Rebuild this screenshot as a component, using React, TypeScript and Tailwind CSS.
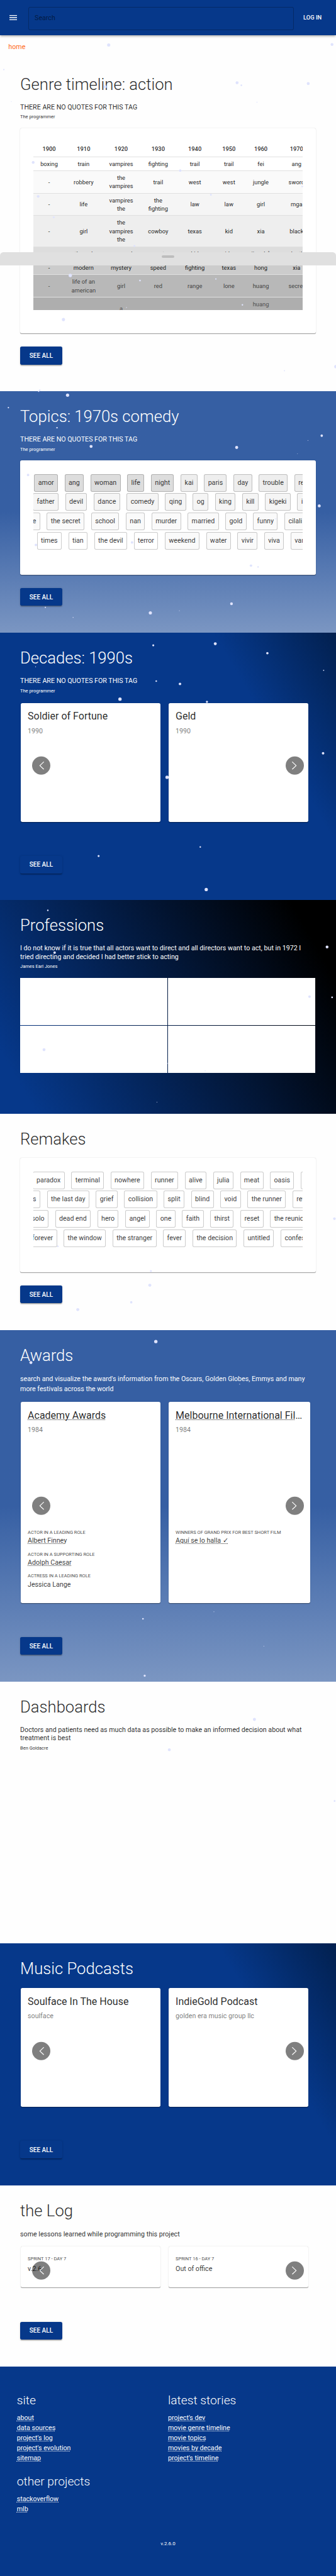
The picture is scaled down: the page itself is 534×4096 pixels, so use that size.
import type { ReactNode } from "react";

/* ---------- data ---------- */

const decades = ["1900", "1910", "1920", "1930", "1940", "1950", "1960", "1970"];

type TableRow = { tone: string; cells: string[] };

const timeline: TableRow[] = [
  { tone: "bg-white text-black/90", cells: ["boxing", "train", "vampires", "fighting", "trail", "trail", "fei", "ang"] },
  { tone: "bg-[#fafafa] text-black/90", cells: ["-", "robbery", "the\nvampires", "trail", "west", "west", "jungle", "sword"] },
  { tone: "bg-[#f5f5f5] text-black/90", cells: ["-", "life", "vampires\nthe", "the\nfighting", "law", "law", "girl", "mga"] },
  { tone: "bg-[#eeeeee] text-black/90", cells: ["-", "girl", "the\nvampires\nthe", "cowboy", "texas", "kid", "xia", "black"] },
  { tone: "bg-[#dddddd] text-black/90", cells: ["-", "the red", "proposal", "west", "kid", "raiders", "jingchå", "death"] },
  { tone: "bg-[#cccccc] text-black/90", cells: ["-", "modern", "mystery", "speed", "fighting", "texas", "hong", "xia"] },
  { tone: "bg-[#b8b8b8] text-black/70", cells: ["-", "life of an\namerican", "girl", "red", "range", "lone", "huang", "secret"] },
  { tone: "bg-[#aeaeae] text-black/60", cells: ["-", "fireman", "a\nman", "silent", "rider", "wild", "huang\nfei\nhong", "-"] },
];

type ChipRow = { shift: string; chips: [string, string][] };

const g1 = "bg-[#dddddd]";
const g2 = "bg-[#eeeeee]";
const g3 = "bg-[#f5f5f5]";
const g4 = "bg-[#fafafa]";
const g5 = "bg-white";

const topicRows: ChipRow[] = [
  {
    shift: "ml-[1.6px]",
    chips: [["amor", g1], ["ang", g1], ["woman", g1], ["life", g1], ["night", g1], ["kai", g2], ["paris", g2], ["day", g2], ["trouble", g2], ["rena", g2]],
  },
  {
    shift: "-ml-[1.8px]",
    chips: [["father", g3], ["devil", g3], ["dance", g3], ["comedy", g3], ["qing", g3], ["og", g3], ["king", g3], ["kill", g3], ["kigeki", g3], ["italian", g3]],
  },
  {
    shift: "-ml-[32.5px]",
    chips: [["love", g4], ["the secret", g4], ["school", g4], ["nan", g4], ["murder", g4], ["married", g4], ["gold", g4], ["funny", g4], ["cilali", g4]],
  },
  {
    shift: "ml-[7.8px]",
    chips: [["times", g5], ["tian", g5], ["the devil", g5], ["terror", g5], ["weekend", g4], ["water", g4], ["vivir", g4], ["viva", g4], ["var", g4]],
  },
];

const remakeRows: ChipRow[] = [
  {
    shift: "-ml-[2.5px]",
    chips: [["paradox", g5], ["terminal", g5], ["nowhere", g5], ["runner", g5], ["alive", g5], ["julia", g5], ["meat", g5], ["oasis", g5], ["twins", g5]],
  },
  {
    shift: "-ml-[27.7px]",
    chips: [["lies", g5], ["the last day", g5], ["grief", g5], ["collision", g5], ["split", g5], ["blind", g5], ["void", g5], ["the runner", g5], ["refuge", g5]],
  },
  {
    shift: "-ml-[14.1px]",
    chips: [["solo", g5], ["dead end", g5], ["hero", g5], ["angel", g5], ["one", g5], ["faith", g5], ["thirst", g5], ["reset", g5], ["the reunion", g5]],
  },
  {
    shift: "-ml-[13.2px]",
    chips: [["forever", g5], ["the window", g5], ["the stranger", g5], ["fever", g5], ["the decision", g5], ["untitled", g5], ["confession", g5]],
  },
];

/* x, y, radius of every snowflake drifting over the page */
const snow: [number, number, number][] = [
  [258.7, 107, 3.8], [790.3, 106, 3.4], [9.2, 165.7, 1.6], [250.5, 206.7, 3.6], [564.3, 197, 3.5], [574.5, 203, 2],
  [733.7, 199, 3.5], [27, 242, 1], [611.7, 243.3, 1.2], [79, 386.7, 3.3], [429, 406.3, 3], [719.4, 444, 2],
  [90.8, 467.7, 3.2], [502, 464, 2.2], [128, 517.3, 2.2], [320, 585.7, 2.3], [167.3, 656, 4], [333.2, 668, 2.1],
  [513.8, 664.3, 1.7], [301, 732.3, 1], [577, 726, 1.8], [151, 761, 3.8], [677, 882.7, 1.3], [799.5, 873, 4],
  [94.5, 929.5, 2], [92, 931.8, 1.5], [160.8, 941, 3.9], [20, 970.7, 1.6], [135.7, 1018.6, 1.8], [765.8, 1037.5, 2.9],
  [733, 1048.8, 0.8], [216.8, 1063.1, 3.6], [563.3, 1065.6, 3.6], [708.2, 1080.7, 0.7], [66.8, 1131.2, 2.9],
  [759.9, 1204.8, 3.5], [656.6, 1235.4, 1.3], [314.3, 1291.8, 2.9], [85.5, 1297.8, 3], [597.4, 1346.9, 2.9],
  [614.3, 1350, 1.8], [551, 1437.7, 3.3], [108, 1446.2, 1.5], [357.9, 1459.5, 3.8], [427, 1454.2, 0.8], [174, 1470.4, 1],
  [364.8, 1536.7, 2.4], [512.4, 1533, 3.5], [636.4, 1555.5, 2.8], [84.7, 1587.8, 1], [770.4, 1596.3, 1.4],
  [371.9, 1622, 1.9], [428.4, 1628.6, 3], [285.6, 1664.9, 4], [492.6, 1671.4, 2.5], [769, 1793.9, 3], [397.6, 1851, 3.9],
  [476.7, 2017, 1.8], [234.7, 2038.4, 2.4], [490.9, 2118.4, 3.9], [113.8, 2168, 1.8], [778.5, 2255, 3.4],
  [130, 2268.7, 3], [790.5, 2375, 2.1], [736.7, 2373.3, 3], [104.8, 2499.7, 3.5], [398.5, 2532.3, 1], [488.3, 2550.3, 1.2],
  [373.5, 2624.7, 0.8], [796, 2902.3, 3.2], [137.8, 2968, 1.9], [359.2, 3027, 2.3], [356.6, 3060.7, 3.7],
  [312.4, 3101.3, 2.8], [185.2, 3118.7, 3.6], [370.9, 3194.8, 4], [73.6, 3244.8, 3.6], [570.4, 3296.3, 0.9],
  [509.2, 3838.2, 0.9], [340.3, 3855, 2], [628, 3920.3, 0.8], [344.4, 3990.6, 2.5], [605.6, 4094.7, 3.6],
  [403, 4167, 3.4], [796.4, 4289, 2.1],
];

const faintSnow: [number, number, number][] = [
  [445, 1287.6, 3], [299.8, 2807, 2.8], [426, 2856.7, 2.4], [592.3, 2911.3, 2.8],
];

/* ---------- building blocks ---------- */

const paper =
  "rounded-[4px] bg-white shadow-[0_2px_1px_-1px_rgba(0,0,0,0.2),0_1px_1px_0_rgba(0,0,0,0.14),0_1px_3px_0_rgba(0,0,0,0.12)]";

const dotted = "underline decoration-dotted decoration-1 underline-offset-2";

function Section({ title, tone, children }: { title: string; tone: string; children?: ReactNode }) {
  return (
    <section className={`px-12 pt-9 ${tone}`}>
      <h2 className="text-[38.4px] leading-[48px] font-light whitespace-nowrap">{title}</h2>
      {children}
    </section>
  );
}

function Quote({ text, author }: { text: string; author: string }) {
  return (
    <blockquote className="mt-[21px]">
      <p className="text-base leading-5">{text}</p>
      <cite className="mt-1.5 block text-[11.2px] leading-4 not-italic">{author}</cite>
    </blockquote>
  );
}

function SeeAll({ className }: { className: string }) {
  return (
    <div className={`flex pb-16 ${className}`}>
      <button className="h-[42px] w-[100px] rounded-[4px] bg-[#06388a] text-[15px] font-medium text-white shadow-[0_3px_1px_-2px_rgba(0,0,0,0.2),0_2px_2px_0_rgba(0,0,0,0.14),0_1px_5px_0_rgba(0,0,0,0.12)]">
        SEE ALL
      </button>
    </div>
  );
}

function ChipCloud({ rows, className }: { rows: ChipRow[]; className: string }) {
  return (
    <div className={`h-[272px] p-8 ${paper} ${className}`}>
      <div className="flex flex-col gap-1 overflow-hidden">
        {rows.map((row) => (
          <div key={row.chips[0][0]} className={`flex gap-4 ${row.shift}`}>
            {row.chips.map(([label, fill]) => (
              <span
                key={label}
                className={`flex h-[42px] shrink-0 items-center rounded-[4px] border border-black/20 px-2 text-base whitespace-nowrap text-black/80 ${fill}`}
              >
                {label}
              </span>
            ))}
          </div>
        ))}
      </div>
    </div>
  );
}

function Arrow({ side }: { side: "left" | "right" }) {
  return (
    <button
      aria-label={side === "left" ? "previous" : "next"}
      className={`absolute top-1/2 z-10 flex size-[43px] -translate-y-1/2 items-center justify-center rounded-full bg-black/50 ${side === "left" ? "left-[29px]" : "right-[29px]"}`}
    >
      <svg width="12" height="20" viewBox="0 0 12 20" fill="none" stroke="#fff" strokeWidth="1.8" strokeLinecap="round" strokeLinejoin="round">
        <path d={side === "left" ? "M11 1.5 2 10l9 8.500" : "M1 1.500 10 10l-9 8.500"} />
      </svg>
    </button>
  );
}

function Slider({ className, children }: { className: string; children: ReactNode }) {
  return (
    <div className={`relative flex gap-5 pt-0.5 pb-[18px] pl-0.5 ${className}`}>
      {children}
      <Arrow side="left" />
      <Arrow side="right" />
    </div>
  );
}

function MediaCard({ title, subtitle, size, linked, children }: { title: string; subtitle: string; size: string; linked?: boolean; children?: ReactNode }) {
  return (
    <article className={`p-4 ${paper} ${size}`}>
      <h3 className={`truncate text-2xl leading-8 text-black/85 ${linked ? dotted : ""}`}>{title}</h3>
      <p className="mt-[7.5px] text-base leading-6 text-black/55">{subtitle}</p>
      {children}
    </article>
  );
}

function Credit({ label, name, linked = true }: { label: string; name: string; linked?: boolean }) {
  return (
    <div>
      <p className="text-[11.2px] leading-4 text-black/75">{label}</p>
      <p className={`text-base leading-6 text-black/80 ${linked ? dotted : ""}`}>{name}</p>
    </div>
  );
}

function LinkList({ title, links, className = "" }: { title: string; links: string[]; className?: string }) {
  return (
    <div className={className}>
      <h3 className="text-[28.8px] leading-9 font-light">{title}</h3>
      <ul className="mt-[11px]">
        {links.map((link) => (
          <li key={link} className="text-base leading-6">
            <a className={dotted}>{link}</a>
          </li>
        ))}
      </ul>
    </div>
  );
}

/* ---------- page ---------- */

function Header() {
  return (
    <header className="relative flex h-[84px] bg-[#06388a] pl-5 shadow-[0_2px_4px_-1px_rgba(0,0,0,0.2),0_4px_5px_0_rgba(0,0,0,0.14),0_1px_10px_0_rgba(0,0,0,0.12)]">
      <svg className="mt-[30px]" width="24" height="24" viewBox="0 0 24 24" fill="#fff">
        <path d="M3 18h18v-2H3v2zm0-5h18v-2H3v2zm0-7v2h18V6H3z" />
      </svg>
      <div className="mt-4 ml-6 flex h-14 w-[632px] items-center rounded-[4px] border border-black/25 pl-[13px] text-base text-black/55">
        Search
      </div>
      <span className="mt-[31px] ml-[22px] text-sm leading-5 font-medium text-white">LOG IN</span>
    </header>
  );
}

function TimelineTable() {
  return (
    <div className={`mt-[18px] h-[489px] p-8 ${paper}`}>
      <div className="h-[401px] overflow-hidden">
        <table className="w-[673px] table-fixed border-separate border-spacing-0 text-center text-sm leading-5">
          <colgroup>
            <col className="w-[73.700px]" />
            <col className="w-[90.600px]" />
            <col className="w-[88px]" />
            <col className="w-[88.400px]" />
            <col className="w-[86.200px]" />
            <col className="w-[76px]" />
            <col className="w-[76px]" />
            <col className="w-[94.100px]" />
          </colgroup>
          <thead>
            <tr>
              {decades.map((year) => (
                <th key={year} className="h-[37px] border-b border-[#e0e0e0] font-medium text-black/85">
                  {year}
                </th>
              ))}
            </tr>
          </thead>
          <tbody>
            {timeline.map((row, index) => (
              <tr key={index} className={row.tone}>
                {row.cells.map((cell, column) => (
                  <td key={column} className="border-b border-[#e0e0e0] py-1.5 whitespace-pre">
                    {cell}
                  </td>
                ))}
              </tr>
            ))}
          </tbody>
        </table>
      </div>
    </div>
  );
}

function Footer() {
  return (
    <footer className="h-[500px] bg-[#06388a] px-10 pt-16 text-white">
      <div className="grid grid-cols-2">
        <div>
          <LinkList title="site" links={["about", "data sources", "project's log", "project's evolution", "sitemap"]} />
          <LinkList className="mt-[26px]" title="other projects" links={["stackoverflow", "mlb"]} />
        </div>
        <LinkList
          title="latest stories"
          links={["project's dev", "movie genre timeline", "movie topics", "movies by decade", "project's timeline"]}
        />
      </div>
      <p className="mt-[62px] text-center text-xs leading-[18px]">v.2.6.0</p>
    </footer>
  );
}

export default function App() {
  return (
    <div className="h-[4096px] overflow-hidden bg-white">
      <div className="relative overflow-hidden bg-[#fefefe] font-['Roboto',sans-serif] text-black/85 [zoom:0.6677]">
        <Header />
        <nav className="h-14 pt-4 pl-5 text-base leading-6 text-[#ff6a1a]">home</nav>

        <Section title="Genre timeline: action" tone="">
          <Quote text="THERE ARE NO QUOTES FOR THIS TAG" author="The programmer" />
          <TimelineTable />
          <SeeAll className="pt-8" />
        </Section>

        <Section title="Topics: 1970s comedy" tone="bg-linear-to-b from-[#365fa3] from-50% to-[#7b96c2] text-white">
          <Quote text="THERE ARE NO QUOTES FOR THIS TAG" author="The programmer" />
          <ChipCloud rows={topicRows} className="mt-[18px]" />
          <SeeAll className="pt-8" />
        </Section>

        <Section title="Decades: 1990s" tone="bg-linear-[60deg] from-[#06388a] from-75% to-[#02204f] text-white">
          <Quote text="THERE ARE NO QUOTES FOR THIS TAG" author="The programmer" />
          <Slider className="mt-[18px]">
            <MediaCard title="Soldier of Fortune" subtitle="1990" size="h-[283px] w-[332px]" />
            <MediaCard title="Geld" subtitle="1990" size="h-[283px] w-[332px]" />
          </Slider>
          <SeeAll className="pt-[63px]" />
        </Section>

        <Section title="Professions" tone="bg-linear-[60deg] from-[#06388a] from-8% to-black to-90% text-white">
          <Quote
            text="I do not know if it is true that all actors want to direct and all directors want to act, but in 1972 I tried directing and decided I had better stick to acting"
            author="James Earl Jones"
          />
          <div className="mt-[18px] grid grid-cols-[350px_350px] grid-rows-[112px_112px] gap-0.5 pb-[98px]">
            <div className="bg-white" />
            <div className="bg-white" />
            <div className="bg-white" />
            <div className="bg-white" />
          </div>
        </Section>

        <Section title="Remakes" tone="">
          <ChipCloud rows={remakeRows} className="mt-[21px]" />
          <SeeAll className="pt-8" />
        </Section>

        <Section title="Awards" tone="bg-linear-to-b from-[#365fa3] from-50% to-[#7b96c2] text-white">
          <p className="mt-[21px] text-base leading-6">
            search and visualize the award's information from the Oscars, Golden Globes, Emmys and many more festivals
            across the world
          </p>
          <Slider className="mt-4">
            <MediaCard title="Academy Awards" subtitle="1984" size="h-[479px] w-[332px]" linked>
              <div className="mt-[224px] flex flex-col gap-3">
                <Credit label="ACTOR IN A LEADING ROLE" name="Albert Finney" />
                <Credit label="ACTOR IN A SUPPORTING ROLE" name="Adolph Caesar" />
                <Credit label="ACTRESS IN A LEADING ROLE" name="Jessica Lange" linked={false} />
              </div>
            </MediaCard>
            <MediaCard title="Melbourne International Film Festival" subtitle="1984" size="h-[479px] w-[336px]" linked>
              <div className="mt-[224px]">
                <Credit label="WINNERS OF GRAND PRIX FOR BEST SHORT FILM" name="Aquí se lo halla ✓" />
              </div>
            </MediaCard>
          </Slider>
          <SeeAll className="pt-[63px]" />
        </Section>

        <div className="h-[623px]">
          <Section title="Dashboards" tone="">
            <Quote
              text="Doctors and patients need as much data as possible to make an informed decision about what treatment is best"
              author="Ben Goldacre"
            />
          </Section>
        </div>

        <Section title="Music Podcasts" tone="bg-linear-[60deg] from-[#06388a] from-75% to-[#02204f] text-white">
          <Slider className="mt-[21px]">
            <MediaCard title="Soulface In The House" subtitle="soulface" size="h-[283px] w-[332px]" />
            <MediaCard title="IndieGold Podcast" subtitle="golden era music group llc" size="h-[283px] w-[332px]" />
          </Slider>
          <SeeAll className="pt-[63px]" />
        </Section>

        <Section title="the Log" tone="">
          <p className="mt-[21px] text-base leading-6">some lessons learned while programming this project</p>
          <Slider className="mt-[15px]">
            <article className={`h-[97px] w-[332px] px-4 pt-[22px] ${paper}`}>
              <p className="text-[11.2px] leading-4 text-black/75">SPRINT 17 - DAY 7</p>
              <p className="mt-[3px] text-base leading-6 text-black/80">v.2.6</p>
            </article>
            <article className={`h-[97px] w-[332px] px-4 pt-[22px] ${paper}`}>
              <p className="text-[11.2px] leading-4 text-black/75">SPRINT 16 - DAY 7</p>
              <p className="mt-[3px] text-base leading-6 text-black/80">Out of office</p>
            </article>
          </Slider>
          <SeeAll className="pt-16" />
        </Section>

        <Footer />

        {/* snow drifting over the content */}
        <svg className="pointer-events-none absolute top-0 left-0" width="800" height="4400" viewBox="0 0 800 4400" fill="#dfe3fd">
          {snow.map(([x, y, r]) => (
            <circle key={`${x}-${y}`} cx={x} cy={y} r={r} />
          ))}
          <g opacity="0.4">
            {faintSnow.map(([x, y, r]) => (
              <circle key={`${x}-${y}`} cx={x} cy={y} r={r} />
            ))}
          </g>
        </svg>

        {/* collapsed bottom drawer with its drag handle */}
        <div className="absolute top-[600px] left-0 z-20 flex h-8 w-full justify-center rounded-t-lg bg-[#e0e0e0] pt-2">
          <div className="h-1.5 w-[30px] rounded-[3px] bg-[#bdbdbd]" />
        </div>
      </div>
    </div>
  );
}
